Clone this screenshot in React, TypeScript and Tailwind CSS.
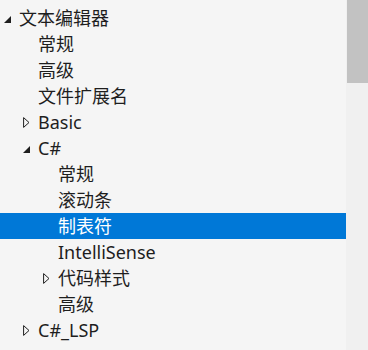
type Node = { label: string; level: number; state?: "open" | "closed"; selected?: boolean };

const rows: Node[] = [
  { label: "文本编辑器", level: 0, state: "open" },
  { label: "常规", level: 1 },
  { label: "高级", level: 1 },
  { label: "文件扩展名", level: 1 },
  { label: "Basic", level: 1, state: "closed" },
  { label: "C#", level: 1, state: "open" },
  { label: "常规", level: 2 },
  { label: "滚动条", level: 2 },
  { label: "制表符", level: 2, selected: true },
  { label: "IntelliSense", level: 2 },
  { label: "代码样式", level: 2, state: "closed" },
  { label: "高级", level: 2 },
  { label: "C#_LSP", level: 1, state: "closed" },
  { label: "C#_LSP", level: 1, state: "closed" },
];

const indents = ["pl-0", "pl-[19px]", "pl-[39px]"];

function Toggle({ state, selected }: { state?: "open" | "closed"; selected?: boolean }) {
  const c = selected ? "#ffffff" : "#1e1e1e";
  if (state === "open")
    return (
      <svg width="7" height="7" viewBox="0 0 7 7" className="ml-[4px] mt-[3px]">
        <polygon points="7,0 7,7 0,7" fill={c} />
      </svg>
    );
  if (state === "closed")
    return (
      <svg width="7" height="11" viewBox="0 0 7 11" className="ml-[4px] mt-[1px]">
        <polygon points="0.6,0.6 6,5.5 0.6,10.4" fill="none" stroke={c} strokeWidth="1" />
      </svg>
    );
  return null;
}

export default function App() {
  return (
    <div
      className="w-[368px] h-[350px] overflow-hidden flex bg-[#f5f5f5] select-none"
      style={{ fontFamily: '"Noto Sans", "Noto Sans CJK SC", sans-serif' }}
    >
      <div className="w-[346px] pt-[5px] flex flex-col">
        {rows.map((r, i) => (
          <div
            key={i}
            className={`h-[26px] shrink-0 flex items-center ${indents[r.level]} ${
              r.selected ? "bg-[#0078d7] text-white" : "text-[#1e1e1e]"
            }`}
          >
            <div className="w-[19px] shrink-0 flex items-center">
              <Toggle state={r.state} selected={r.selected} />
            </div>
            <span className="text-[18px] leading-none whitespace-nowrap">{r.label}</span>
          </div>
        ))}
      </div>
      <div className="w-[22px] h-full bg-[#f0f0f0] flex flex-col">
        <div className="h-[83px] ml-[1px] bg-[#c2c2c2]" />
      </div>
    </div>
  );
}
